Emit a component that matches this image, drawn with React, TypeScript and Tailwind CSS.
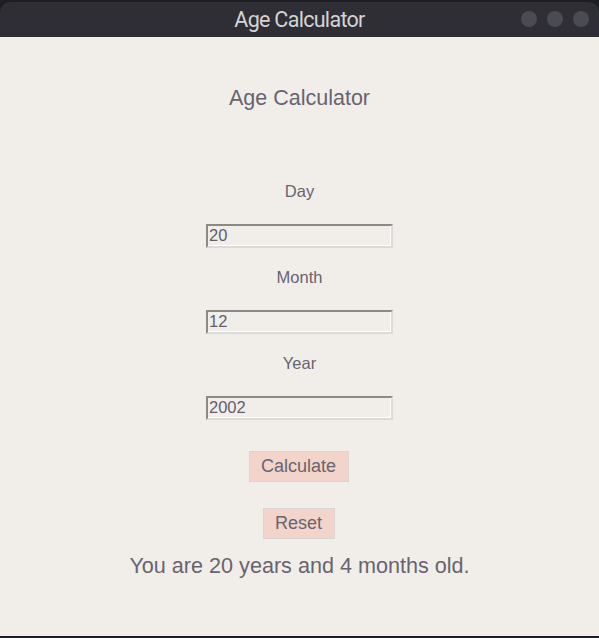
import { useState } from "react";

function Field({ label, value }: { label: string; value: string }) {
  return (
    <div className="flex flex-col items-center">
      <label className="text-[16.5px] leading-[18px] text-[#67646f]">{label}</label>
      <input
        defaultValue={value}
        className="mt-[24px] h-[24px] w-[187px] border-2 border-t-[#8b8a86] border-l-[#8b8a86] border-b-[#dcdad7] border-r-[#dcdad7] bg-[#f1eeea] px-[1px] pb-[2px] text-[16.5px] leading-[18px] text-[#5f5e6e] outline-none shadow-[inset_-1px_-1px_0_#ffffff]"
      />
    </div>
  );
}

export default function App() {
  const [msg] = useState("You are 20 years and 4 months old.");
  return (
    <div className="h-[638px] w-[599px] overflow-hidden bg-[#1c1e24] pt-[2px] font-['Liberation_Sans',Arial,sans-serif]">
      <div className="flex h-[634px] flex-col">
        <div className="relative flex h-[35px] shrink-0 items-center justify-center rounded-t-[10px] bg-[#2e2e34]">
          <span className="font-['Roboto',sans-serif] text-[21.5px] font-normal leading-none tracking-[-0.7px] text-[#d4d4d4]">
            Age Calculator
          </span>
          <div className="absolute right-[10px] top-[9px] flex gap-[10px]">
            <span className="h-[16px] w-[16px] rounded-full bg-[#4b4b53]" />
            <span className="h-[16px] w-[16px] rounded-full bg-[#4b4b53]" />
            <span className="h-[16px] w-[16px] rounded-full bg-[#4b4b53]" />
          </div>
        </div>
        <div className="flex flex-1 flex-col items-center bg-[#f1eeea] pt-[49px] text-[#67646f]">
          <h1 className="text-[21.5px] leading-[24px]">Age Calculator</h1>
          <div className="mt-[72px]">
            <Field label="Day" value="20" />
          </div>
          <div className="mt-[20px]">
            <Field label="Month" value="12" />
          </div>
          <div className="mt-[20px]">
            <Field label="Year" value="2002" />
          </div>
          <button className="mt-[31px] mr-[2px] h-[31px] w-[100px] border border-[#d8d5d2] bg-[#f2d4ca] pb-[2px] text-[18px] leading-none text-[#67646f]">
            Calculate
          </button>
          <button className="mt-[26px] mr-[2px] h-[31px] w-[72px] border border-[#d8d5d2] bg-[#f2d4ca] pb-[2px] text-[18px] leading-none text-[#67646f]">
            Reset
          </button>
          <p className="mt-[15px] text-[21.6px] leading-[24px]">{msg}</p>
        </div>
      </div>
    </div>
  );
}
